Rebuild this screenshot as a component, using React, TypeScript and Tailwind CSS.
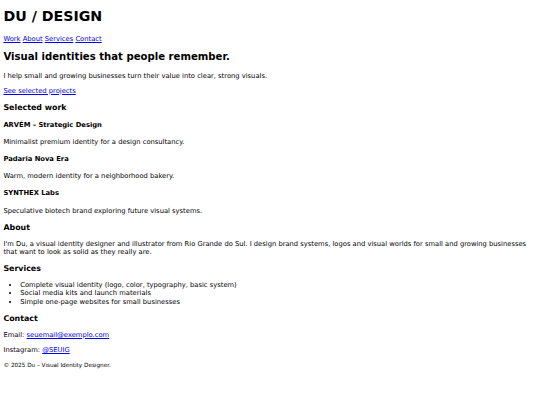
import React from "react";

const link = "text-[#0000ee] underline";

const projects = [
  { name: "ARVÉM – Strategic Design", text: "Minimalist premium identity for a design consultancy." },
  { name: "Padaria Nova Era", text: "Warm, modern identity for a neighborhood bakery." },
  { name: "SYNTHEX Labs", text: "Speculative biotech brand exploring future visual systems." },
];

const services = [
  "Complete visual identity (logo, color, typography, basic system)",
  "Social media kits and launch materials",
  "Simple one-page websites for small businesses",
];

export default function App() {
  return (
    <div className="min-h-[405px] bg-white px-[3.4px] pb-[9px] text-[6.75px] leading-[1.2] text-black font-['DejaVu_Sans',Verdana,sans-serif]">
      <header>
        <h1 className="pt-[8.2px] text-[14.2px] font-bold">DU / DESIGN</h1>
        <nav className="mt-[9.5px]">
          <a href="#work" className={link}>Work</a>{" "}
          <a href="#about" className={link}>About</a>{" "}
          <a href="#services" className={link}>Services</a>{" "}
          <a href="#contact" className={link}>Contact</a>
        </nav>
      </header>

      <main>
        <section>
          <h2 className="mt-[8.4px] text-[10.125px] font-bold">Visual identities that people remember.</h2>
          <p className="mt-[8.4px]">I help small and growing businesses turn their value into clear, strong visuals.</p>
          <p className="mt-[6.75px]">
            <a href="#work" className={link}>See selected projects</a>
          </p>
        </section>

        <section id="work">
          <h3 className="mt-[7.9px] text-[7.9px] font-bold">Selected work</h3>
          {projects.map((p) => (
            <article key={p.name}>
              <h4 className="mt-[9px] font-bold">{p.name}</h4>
              <p className="mt-[9px]">{p.text}</p>
            </article>
          ))}
        </section>

        <section id="about">
          <h3 className="mt-[7.9px] text-[7.9px] font-bold">About</h3>
          <p className="mt-[7.9px]">
            I'm Du, a visual identity designer and illustrator from Rio Grande do Sul. I design brand systems, logos and
            visual worlds for small and growing businesses that want to look as solid as they really are.
          </p>
        </section>

        <section id="services">
          <h3 className="mt-[7.9px] text-[7.9px] font-bold">Services</h3>
          <ul className="mt-[7.9px] list-disc pl-[16.9px]">
            {services.map((s) => (
              <li key={s}>{s}</li>
            ))}
          </ul>
        </section>

        <section id="contact">
          <h3 className="mt-[7.9px] text-[7.9px] font-bold">Contact</h3>
          <p className="mt-[7.9px]">
            Email: <a href="mailto:seuemail@exemplo.com" className={link}>seuemail@exemplo.com</a>
          </p>
          <p className="mt-[6.75px]">
            Instagram: <a href="#" className={link}>@SEUIG</a>
          </p>
        </section>
      </main>

      <footer className="mt-[6.75px]">
        <p>
          <small className="text-[5.7px]">© 2025 Du – Visual Identity Designer.</small>
        </p>
      </footer>
    </div>
  );
}
